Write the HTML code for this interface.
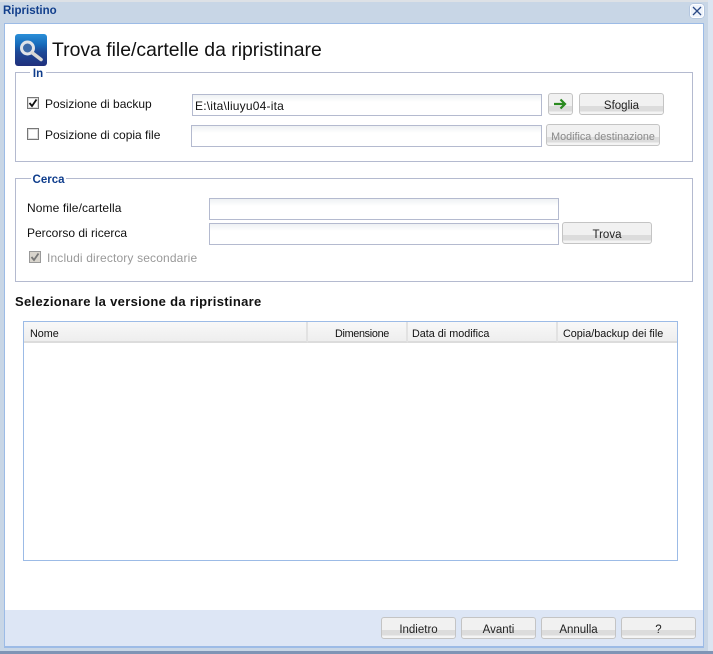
<!DOCTYPE html>
<html><head><meta charset="utf-8"><style>
html,body{margin:0;padding:0}
body{width:713px;height:654px;position:relative;overflow:hidden;background:#c8d6e6;font-family:"Liberation Sans",sans-serif;font-size:12px;color:#111}
div,span{position:absolute;box-sizing:border-box;white-space:nowrap}
.g{border:1px solid #b4bacf}
.lg{background:#fff;color:#0f3d8c;font-weight:bold;font-size:11.5px;line-height:14px;text-align:center}
.t{line-height:14px}
.i{border:1px solid #b4bacf;background:linear-gradient(#eef1f3 0,#fff 7px);line-height:22px;padding-left:2px;letter-spacing:.2px}
.b{border:1px solid #c4c4c4;border-radius:3px;background:linear-gradient(#f1f1f1 0,#f1f1f1 59%,#dcdcdc 59%,#dcdcdc 88%,#f4f4f4 88%);text-align:center;line-height:24px;color:#222;font-size:11.5px}
.c{width:12px;height:12px;border:1px solid #777;background:#fff;box-shadow:inset 0 0 0 1px #ddd}
.h{top:322px;height:21px;line-height:24px;font-size:10.8px;background:linear-gradient(#f8f8f8,#eeeeee);border-bottom:2px solid #dcdcdc;border-right:2px solid #e2e2e2;padding-left:6px}
</style></head><body>
<div style="left:0;top:0;width:713px;height:2px;background:#dde1e6"></div>
<div style="left:708px;top:0;width:5px;height:654px;background:#dbe5f1"></div>
<div style="left:0;top:651px;width:713px;height:3px;background:#7f94b5"></div>
<div style="left:3px;top:4px;font-weight:bold;color:#123f8c;font-size:11.5px;line-height:14px">Ripristino</div>
<div style="left:690px;top:4px;width:14px;height:14px;background:#eef3fb;border:1px solid #fff;border-radius:3px;box-shadow:0 0 0 0.5px #9fb6d8">
<svg width="12" height="12" style="position:absolute;left:0;top:0"><path d="M2 2L10 10M10 2L2 10" stroke="#2b4a86" stroke-width="1.3"/></svg></div>

<div style="left:4px;top:23px;width:700px;height:625px;background:#fff;border:1px solid #9cbbe6;border-bottom-width:2px"></div>
<div style="left:5px;top:610px;width:698px;height:36px;background:#dde6f5"></div>

<div style="left:15px;top:34px;width:32px;height:32px;border-radius:3px;background:linear-gradient(180deg,#2a8fd8 0,#1668b8 35%,#1d4a98 55%,#202f7c 100%)">
<svg width="32" height="32" style="position:absolute;left:0;top:0"><circle cx="12.5" cy="14" r="6" fill="#3c6aa8" stroke="#dfe3e8" stroke-width="3"/><path d="M17.5 19L26 25.5" stroke="#d8d8d4" stroke-width="3.6" stroke-linecap="round"/></svg></div>
<div style="left:52px;top:39px;font-size:19.4px;line-height:22px;color:#111">Trova file/cartelle da ripristinare</div>

<div class="g" style="left:15px;top:72px;width:678px;height:90px"></div>
<div class="lg" style="left:30px;top:67px;width:16px">In</div>
<div class="c" style="left:27px;top:97px"><svg width="10" height="10" style="position:absolute;left:0;top:0"><path d="M1.5 5L4 8L8.5 1.5" fill="none" stroke="#111" stroke-width="1.8"/></svg></div>
<div class="t" style="left:45px;top:97px">Posizione di backup</div>
<div class="i" style="left:192px;top:94px;width:350px;height:22px">E:\ita\liuyu04-ita</div>
<div class="b" style="left:548px;top:93px;width:25px;height:22px"><svg width="14" height="12" style="position:absolute;left:4px;top:4px"><path d="M1 6H12M7.5 1.5L12 6L7.5 10.5" fill="none" stroke="#2a8a20" stroke-width="2.2"/></svg></div>
<div class="b" style="left:579px;top:93px;width:85px;height:22px">Sfoglia</div>
<div class="c" style="left:27px;top:128px"></div>
<div class="t" style="left:45px;top:128px">Posizione di copia file</div>
<div class="i" style="left:191px;top:125px;width:351px;height:22px"></div>
<div class="b" style="left:546px;top:124px;width:114px;height:22px;color:#8a8a8a;font-size:10.8px">Modifica destinazione</div>

<div class="g" style="left:15px;top:178px;width:678px;height:104px"></div>
<div class="lg" style="left:31px;top:173px;width:35px">Cerca</div>
<div class="t" style="left:27px;top:201px;letter-spacing:.1px">Nome file/cartella</div>
<div class="i" style="left:209px;top:198px;width:350px;height:22px"></div>
<div class="t" style="left:27px;top:226px">Percorso di ricerca</div>
<div class="i" style="left:209px;top:223px;width:350px;height:22px"></div>
<div class="b" style="left:562px;top:222px;width:90px;height:22px">Trova</div>
<div class="c" style="left:29px;top:251px;background:#d8d4cc;border-color:#999;box-shadow:none"><svg width="10" height="10" style="position:absolute;left:0;top:0"><path d="M1.5 5L4 8L8.5 1.5" fill="none" stroke="#777" stroke-width="1.8"/></svg></div>
<div class="t" style="left:47px;top:251px;color:#999;letter-spacing:.15px">Includi directory secondarie</div>

<div class="t" style="left:15px;top:295px;font-weight:bold;font-size:13px;letter-spacing:.32px;color:#111">Selezionare la versione da ripristinare</div>

<div style="left:23px;top:321px;width:655px;height:240px;border:1px solid #9cbbe6;background:#fff"></div>
<div class="h" style="left:24px;width:284px">Nome</div>
<div class="h" style="left:308px;width:100px;text-align:right;padding-right:17px;letter-spacing:-.3px">Dimensione</div>
<div class="h" style="left:408px;width:150px;padding-left:4px">Data di modifica</div>
<div class="h" style="left:558px;width:119px;padding-left:5px;border-right:0">Copia/backup dei file</div>

<div class="b" style="left:381px;top:617px;width:75px;height:22px">Indietro</div>
<div class="b" style="left:461px;top:617px;width:75px;height:22px">Avanti</div>
<div class="b" style="left:541px;top:617px;width:75px;height:22px">Annulla</div>
<div class="b" style="left:621px;top:617px;width:75px;height:22px">?</div>
</body></html>
